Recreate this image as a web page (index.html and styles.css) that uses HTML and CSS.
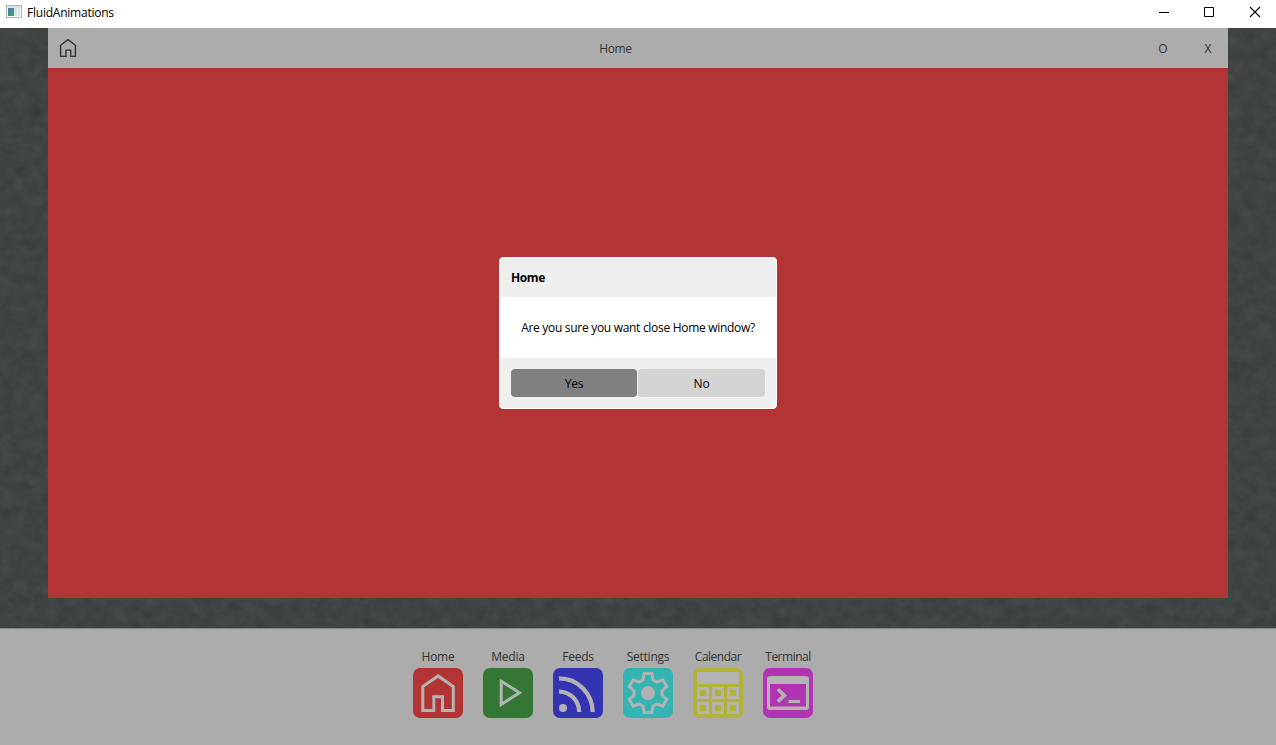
FILE: index.html
```html
<!DOCTYPE html>
<html lang="en">
<head>
<meta charset="utf-8">
<title>FluidAnimations</title>
<link rel="stylesheet" href="styles.css">
</head>
<body>
<header class="titlebar">
  <svg class="app-icon" width="16" height="14" viewBox="0 0 16 14">
    <defs><linearGradient id="pane" x1="0" y1="0" x2="1" y2="1"><stop offset="0" stop-color="#4a78b8"/><stop offset="1" stop-color="#48a45c"/></linearGradient></defs>
    <rect x=".5" y=".5" width="15" height="12" fill="#f4f6f7" stroke="#b0b6b9"/>
    <rect x="1" y="1" width="14" height="2" fill="#dde3e6"/>
    <rect x="2" y="3" width="6" height="8" fill="url(#pane)"/>
    <rect x="8" y="3" width="3" height="8" fill="#d3e3eb"/>
    <rect x="12" y="3" width="2" height="8" fill="#cfe4e6"/>
  </svg>
  <span class="app-name">FluidAnimations</span>
  <div class="controls">
    <svg width="46" height="28" viewBox="0 0 46 28"><path d="M21 12.5h10" stroke="#000"/></svg>
    <svg width="46" height="28" viewBox="0 0 46 28"><path d="M20.5 7.5h9v9h-9z" fill="none" stroke="#000"/></svg>
    <svg width="46" height="28" viewBox="0 0 46 28"><path d="M20 7l10 10M30 7l-10 10" stroke="#000" stroke-width="1.1"/></svg>
  </div>
</header>
<main class="desktop">
  <svg class="wallpaper" width="1276" height="600">
    <filter id="stone" x="0" y="0" width="100%" height="100%" color-interpolation-filters="sRGB">
      <feTurbulence type="fractalNoise" baseFrequency=".07 .09" numOctaves="4" seed="8"/>
      <feColorMatrix values=".06 .04 0 0 .197  .06 .04 0 0 .214  .06 .04 0 0 .218  0 0 0 0 1"/>
    </filter>
    <rect width="1276" height="600" filter="url(#stone)"/>
  </svg>
  <section class="window">
    <div class="window-bar">
      <svg class="bar-home" width="18" height="20" viewBox="0 0 18 20"><path d="M1.6 18.4V7.3L9 1.6l7.4 5.7v11.1h-4.7v-6.3H6.9v6.3z" fill="none" stroke="#333" stroke-width="1.4"/></svg>
      <span class="bar-title">Home</span>
      <span class="bar-button">O</span>
      <span class="bar-button">X</span>
    </div>
    <div class="window-body"></div>
  </section>
  <div class="dialog">
    <div class="dialog-title">Home</div>
    <div class="dialog-message"><span>Are you sure you want close Home window?</span></div>
    <div class="dialog-actions">
      <button class="button primary">Yes</button>
      <button class="button">No</button>
    </div>
  </div>
</main>
<footer class="dock">
  <div class="item"><span>Home</span>
    <svg class="tile home" viewBox="0 0 50 50"><path class="line" d="M9.8 42.5V18.6L25 7.9l15.3 10.7v23.9H29.5V28.8h-8.7v13.7z"/></svg></div>
  <div class="item"><span>Media</span>
    <svg class="tile media" viewBox="0 0 50 50"><path class="line" d="M18.2 13.2L36.5 24.8 18.2 36.4z"/></svg></div>
  <div class="item"><span>Feeds</span>
    <svg class="tile feeds" viewBox="0 0 50 50"><circle class="fill" cx="10" cy="40" r="4"/><path class="line thick" d="M6 23.6A20.2 20.4 0 0 1 26.2 44M6 10.4A33.6 33.6 0 0 1 39.6 44"/></svg></div>
  <div class="item"><span>Settings</span>
    <svg class="tile settings" viewBox="0 0 50 50"><g transform="translate(25 25)"><circle class="fill" r="7"/><path class="line" d="M-3.9-19.5L3.9-19.5 5-13.3 9-11 14.9-13.1 18.8-6.4 14-2.3 14 2.3 18.8 6.4 14.9 13.1 9 11 5 13.3 3.9 19.5-3.9 19.5-5 13.3-9 11-14.9 13.1-18.8 6.4-14 2.3-14-2.3-18.8-6.4-14.9-13.1-9-11-5-13.3z"/></g></svg></div>
  <div class="item tight"><span>Calendar</span>
    <svg class="tile calendar" viewBox="0 0 50 50"><path class="fill" fill-rule="evenodd" d="M4 4h42v12H4zM4 19h12v12H4zm3 3v6h6v-6zM19 19h12v12H19zm3 3v6h6v-6zM34 19h12v12H34zm3 3v6h6v-6zM4 34h12v12H4zm3 3v6h6v-6zM19 34h12v12H19zm3 3v6h6v-6zM34 34h12v12H34zm3 3v6h6v-6z"/></svg></div>
  <div class="item tight"><span>Terminal</span>
    <svg class="tile terminal" viewBox="0 0 50 50"><path class="fill" fill-rule="evenodd" d="M7 8h36q3 0 3 3v28q0 3-3 3H7q-3 0-3-3V11q0-3 3-3zM7 16v22.5h36V16z"/><path class="line terminal-prompt" d="M14.8 21.2l6.6 6.2-6.6 6.2"/><path class="fill" d="M25.5 32H37v3H25.5z"/></svg></div>
</footer>
</body>
</html>
```
FILE: styles.css
```css
* { box-sizing: border-box; }
body {
  margin: 0;
  width: 1276px;
  height: 745px;
  overflow: hidden;
  display: flex;
  flex-direction: column;
  background: #fff;
  color: #000;
  font: 12px/16px "Open Sans", "Noto Sans", sans-serif;
}
.titlebar { height: 28px; flex: none; display: flex; padding-left: 6px; }
.app-icon { margin-top: 5px; }
.app-name { margin: 5px 0 0 5px; letter-spacing: -.23px; }
.controls { display: flex; margin-left: auto; }
.desktop { position: relative; height: 600px; flex: none; padding: 0 48px 30px; background: #3f4445; }
.wallpaper { position: absolute; inset: 0; }
.window { position: relative; height: 570px; display: flex; flex-direction: column; }
.window-bar { height: 40px; display: flex; align-items: center; padding-left: 11px; background: #acacac; color: #333; }
.bar-home { display: block; }
.bar-title { flex: 1; padding: 2px 0 0 16px; text-align: center; letter-spacing: -.4px; }
.bar-title { padding-right: 0; }
.bar-button { width: 50px; padding-top: 2px; text-align: center; }
.bar-button:last-child { width: 40px; }
.window-body { flex: 1; background: #b33434; }
.dialog {
  position: absolute;
  left: 499px;
  top: 229px;
  width: 278px;
  height: 152px;
  border: 1px solid #fff;
  border-radius: 4px;
  overflow: hidden;
  background: #efefef;
}
.dialog-title { height: 39px; padding: 12px 11px; font-weight: 700; letter-spacing: -.4px; }
.dialog-message { height: 61px; padding-top: 23px; background: #fff; text-align: center; white-space: nowrap; }
.dialog-message span { letter-spacing: -.3px; }
.dialog-actions { display: flex; gap: 1px; padding: 11px; }
.button { flex: 1; height: 28px; padding: 2px 0 0; border: 0; border-radius: 4px; background: #d3d3d3; color: #000; font: inherit; letter-spacing: -.2px; }
.button.primary { flex: 0 0 126px; background: #808080; }
.dock { flex: 1; display: flex; gap: 20px; padding: 20px 0 0 413px; border-top: 1px solid #858585; background: #acacac; color: #333; }
.item { width: 50px; display: flex; flex-direction: column; align-items: center; gap: 3px; }
.item span { white-space: nowrap; letter-spacing: -.25px; }
.item.tight span { letter-spacing: -.5px; }
.tile { display: block; width: 50px; height: 50px; border-radius: 7px; flex: none; }
.line { fill: none; stroke: #b3b3b3; stroke-width: 3; }
.line.thick { stroke-width: 4.3; }
.line.terminal-prompt { stroke-width: 3.6; }
.fill { fill: #b3b3b3; }
.home { background: #b33434; }
.media { background: #347634; }
.feeds { background: #3434b3; }
.settings { background: #34b3b3; }
.calendar { background: #b3b334; }
.terminal { background: #b334b3; }
```
